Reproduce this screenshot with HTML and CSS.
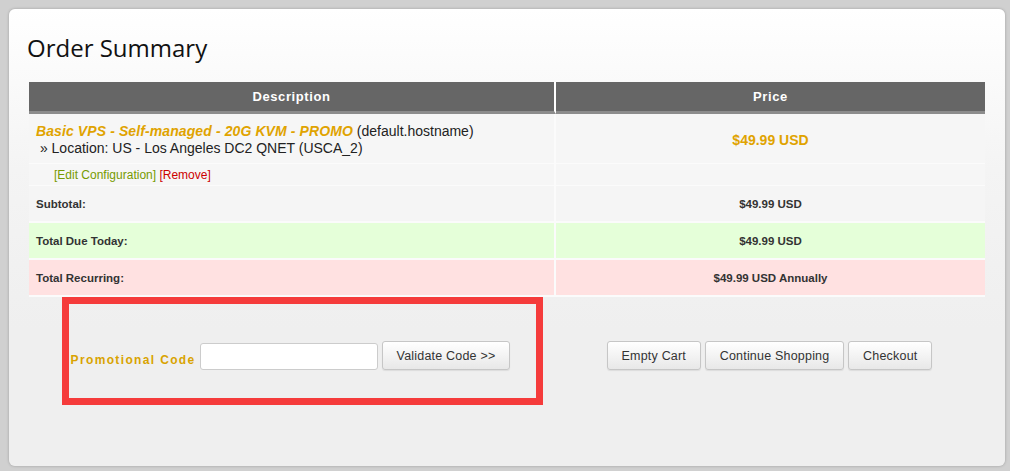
FILE: index.html
```html
<!DOCTYPE html>
<html lang="en">

<head>
    <meta charset="UTF-8">
    <title>Order Summary</title>
    <link rel="stylesheet" href="styles.css">
</head>

<body>
    <div class="card">
        <h1 class="title">Order Summary</h1>

        <table class="cart">
            <colgroup>
                <col class="c-desc">
                <col class="c-price">
            </colgroup>
            <thead>
                <tr>
                    <th class="col-desc">Description</th>
                    <th class="col-price">Price</th>
                </tr>
            </thead>
            <tbody>
                <tr class="product">
                    <td class="col-desc">
                        <strong class="product-name">Basic VPS - Self-managed - 20G KVM - PROMO</strong> (default.hostname)<br>
                        &nbsp;&raquo; Location: US - Los Angeles DC2 QNET (USCA_2)
                    </td>
                    <td class="col-price product-price">$49.99 USD</td>
                </tr>
                <tr class="actions">
                    <td class="col-desc">
                        <a class="edit" href="#">[Edit Configuration]</a>
                        <a class="remove" href="#">[Remove]</a>
                    </td>
                    <td class="col-price"></td>
                </tr>
                <tr class="total subtotal">
                    <td class="col-desc">Subtotal:</td>
                    <td class="col-price">$49.99 USD</td>
                </tr>
                <tr class="total due">
                    <td class="col-desc">Total Due Today:</td>
                    <td class="col-price">$49.99 USD</td>
                </tr>
                <tr class="total recurring">
                    <td class="col-desc">Total Recurring:</td>
                    <td class="col-price">$49.99 USD Annually</td>
                </tr>
                <tr class="promo-row">
                    <td class="promo-cell">
                        <div class="promo">
                            <label class="promo-label" for="promocode">Promotional Code</label>
                            <input class="promo-input" id="promocode" type="text">
                            <button class="btn">Validate Code &gt;&gt;</button>
                        </div>
                        <div class="highlight"></div>
                    </td>
                    <td class="cart-buttons">
                        <button class="btn">Empty Cart</button>
                        <button class="btn">Continue Shopping</button>
                        <button class="btn">Checkout</button>
                    </td>
                </tr>
            </tbody>
        </table>
    </div>
</body>

</html>
```

FILE: styles.css
```css
body {
    margin: 0;
    padding: 9px 5px 5px 9px;
    background-color: #d0d0d0;
    font-family: "Liberation Sans", Arial, sans-serif;
    color: #222;
}

.card {
    box-sizing: border-box;
    height: 457px;
    padding: 23px 20px 0 20px;
    border-radius: 6px;
    background: linear-gradient(#ffffff 0, #f4f4f4 35%, #efefef 70%);
    box-shadow: 0 0 3px rgba(0, 0, 0, 0.25);
}

.title {
    margin: 0 0 18px -2px;
    font-family: "Open Sans", sans-serif;
    font-size: 24px;
    font-weight: 400;
    line-height: 32px;
    color: #111;
}

/* -- Cart table -- */

.cart {
    width: 956px;
    table-layout: fixed;
    border-collapse: separate;
    border-spacing: 0;
}

.c-desc {
    width: 527px;
}

.c-price {
    width: 429px;
}

.cart th {
    height: 29px;
    padding: 0;
    background-color: #666;
    border-bottom: 3px solid #8c8c8c;
    color: #fff;
    font-size: 13px;
    font-weight: bold;
    letter-spacing: 0.6px;
}

.cart th.col-desc {
    border-right: 2px solid #fff;
}

.cart td {
    padding: 0 7px;
    background-color: #f6f6f6;
    border-bottom: 2px solid #fbfbfb;
    font-size: 13px;
}

.cart td.col-desc {
    border-right: 2px solid #fbfbfb;
}

.cart td.col-price {
    text-align: center;
}

.product td {
    height: 36px;
    padding-top: 8px;
    padding-bottom: 5px;
    font-size: 14px;
    line-height: 17px;
    border-bottom-width: 1px;
}

.product-name {
    font-style: italic;
    letter-spacing: 0.1px;
    color: #e0a300;
}

.product-price {
    font-weight: bold;
    color: #e0a300;
}

.actions td {
    height: 21px;
    padding-left: 25px;
    font-size: 12px;
    border-bottom-width: 1px;
}

.actions a {
    text-decoration: none;
}

.edit {
    color: #779a00;
}

.remove {
    color: #cc0000;
}

.total td {
    height: 35px;
    font-size: 11.5px;
    font-weight: bold;
    color: #333;
}

.subtotal td {
    background-color: #f5f5f5;
}

.due td {
    background-color: #e5ffd9;
}

.recurring td {
    background-color: #ffe1e1;
}

/* -- Promo and cart buttons -- */

.promo-row td {
    height: 110px;
    padding: 0;
    vertical-align: top;
    background: transparent;
    border: none;
}

.promo-cell {
    position: relative;
}

.promo {
    display: flex;
    justify-content: center;
    align-items: center;
    gap: 4px;
    padding-top: 45px;
    padding-right: 4px;
}

.promo-label {
    margin-top: 8px;
    font-size: 12px;
    font-weight: bold;
    letter-spacing: 1.35px;
    color: #d9a300;
}

.promo-input {
    box-sizing: border-box;
    width: 178px;
    height: 27px;
    margin: 0;
    border: 1px solid #ccc;
    border-radius: 3px;
    background-color: #fff;
}

.promo .btn {
    margin-top: -1px;
}

.cart-buttons {
    text-align: center;
    padding-top: 44px !important;
    padding-right: 2px !important;
}

.btn {
    box-sizing: border-box;
    height: 29px;
    margin: 0;
    padding: 0 14px;
    border: 1px solid #c6c6c6;
    border-radius: 3px;
    background: linear-gradient(#ffffff, #e8e8e8);
    box-shadow: 0 1px 1px rgba(0, 0, 0, 0.08);
    font-family: "Liberation Sans", Arial, sans-serif;
    font-size: 12.5px;
    letter-spacing: 0.2px;
    color: #333;
}

/* -- Red annotation box drawn over the promo form -- */

.highlight {
    position: absolute;
    left: 33px;
    top: 0;
    width: 481px;
    height: 108px;
    box-sizing: border-box;
    border: 7px solid #f53b3b;
}
```
